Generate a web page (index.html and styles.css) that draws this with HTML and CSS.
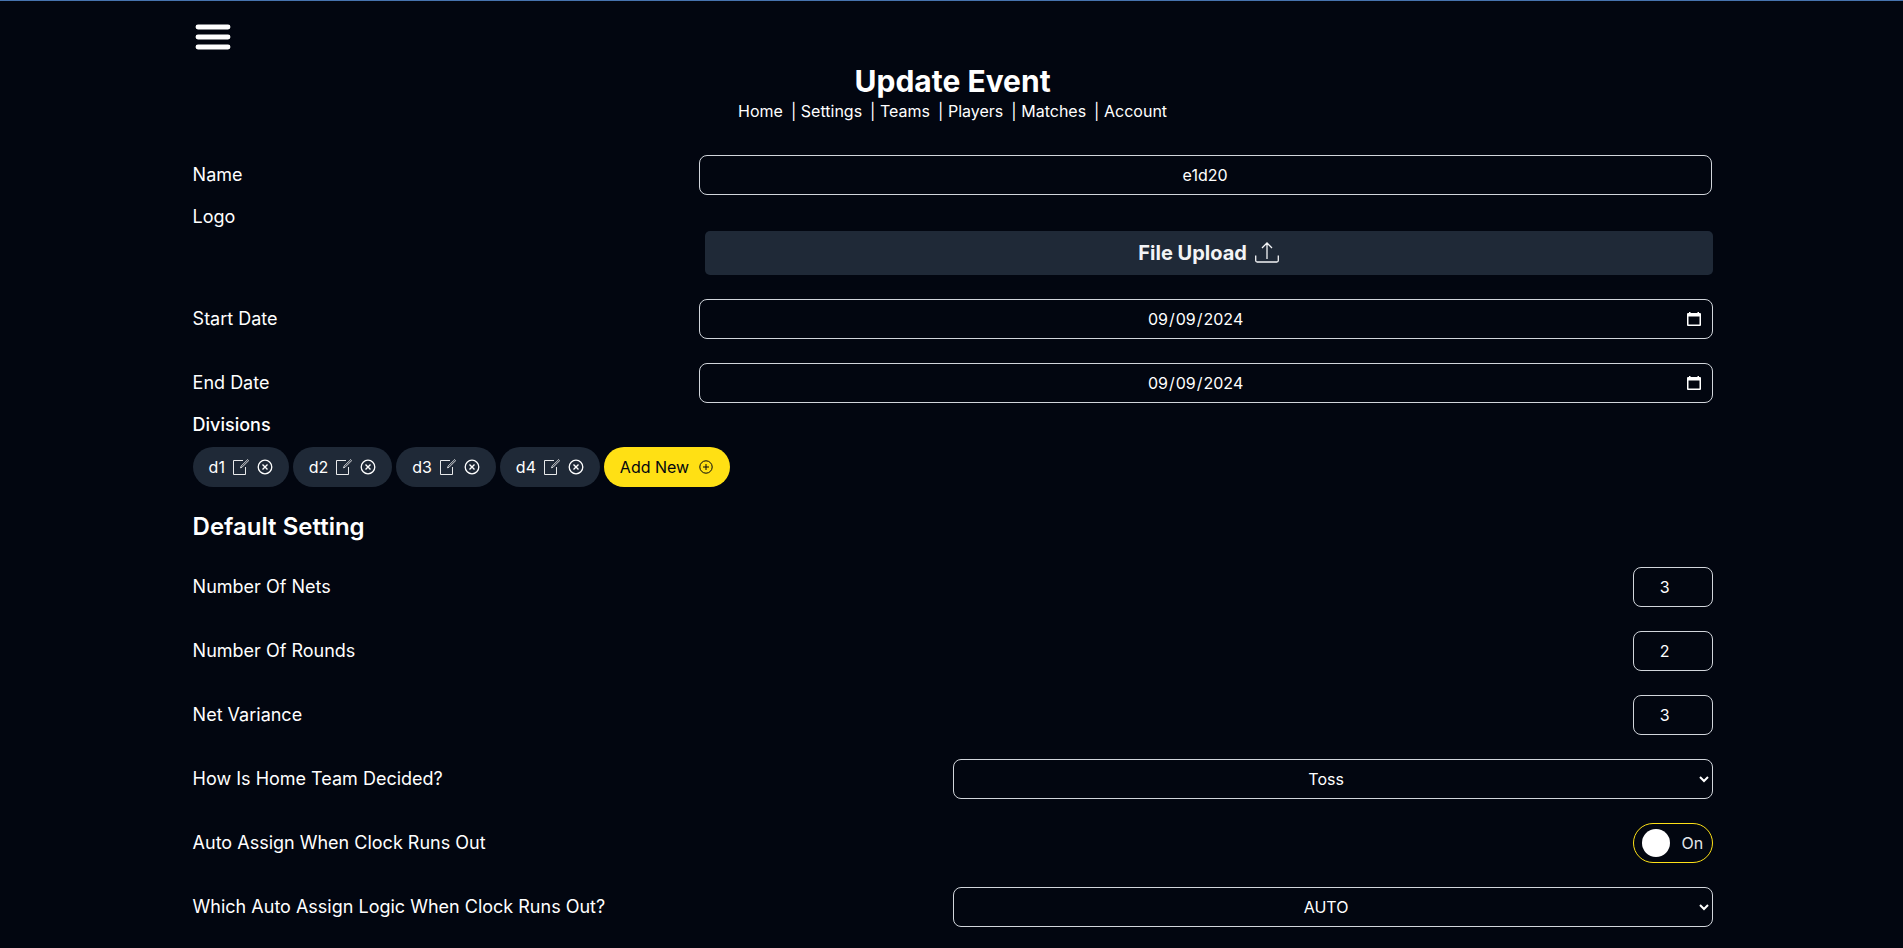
FILE: index.html
```html
<!DOCTYPE html>
<html lang="en">
<head>
<meta charset="utf-8">
<title>Update Event</title>
<link rel="stylesheet" href="styles.css">
</head>
<body>
<svg class="defs" width="0" height="0" aria-hidden="true">
  <symbol id="edit" viewBox="0 0 16 16"><path d="M10 1.500H.5v14h12V8" fill="none" stroke="currentColor" stroke-width=".9"/><path d="M7.500 8.800l.5-1.600L14.700.6l1 1L9.100 8.200z" fill="none" stroke="currentColor" stroke-width=".8"/></symbol>
  <symbol id="remove" viewBox="0 0 16 16"><circle cx="8" cy="8" r="6.800" fill="none" stroke="currentColor" stroke-width="1.300"/><path d="M5.500 5.500l5 5m0-5l-5 5" fill="none" stroke="currentColor" stroke-width="1.400"/></symbol>
  <symbol id="plus" viewBox="0 0 16 16"><circle cx="8" cy="8" r="6.200" fill="none" stroke="currentColor"/><path d="M8 5v6M5 8h6" fill="none" stroke="currentColor"/></symbol>
  <symbol id="calendar" viewBox="0 0 14 15"><path d="M2 0h1.500v1H10.500V0H12v1h1q1 0 1 1v11q0 1-1 1H1q-1 0-1-1V2q0-1 1-1h1zM1.500 4.500v8h11v-8z" fill="currentColor" fill-rule="evenodd"/></symbol>
  <symbol id="chevron" viewBox="0 0 10 8"><path d="M1 2l4 4 4-4" fill="none" stroke="currentColor" stroke-width="2"/></symbol>
</svg>
<div class="page">
  <button class="menu" aria-label="Menu"><svg viewBox="0 0 36 27"><path d="M3 3h30M3 13h30M3 23h30" fill="none" stroke="#fff" stroke-width="4.900" stroke-linecap="round"/></svg></button>
  <h1 class="title">Update Event</h1>
  <nav class="nav"><a>Home</a><span class="bar">|</span><a>Settings</a><span class="bar">|</span><a>Teams</a><span class="bar">|</span><a>Players</a><span class="bar">|</span><a>Matches</a><span class="bar">|</span><a>Account</a></nav>
  <form class="form">
    <div class="row"><label>Name</label><div class="field wide name">e1d20</div></div>
    <div class="logo"><label>Logo</label><div class="upload">File Upload<svg class="upload-icon" viewBox="0 0 24 24"><path d="M.7 14.500v5q0 1.500 1.500 1.500h19.600q1.500 0 1.500-1.500v-5M12 18V2M7 7l5-5 5 5" fill="none" stroke="currentColor" stroke-width="1.300"/></svg></div></div>
    <div class="row"><label>Start Date</label><div class="field wide date"><b>09</b>/<b>09</b>/<b>2024</b><svg class="calendar"><use href="#calendar"/></svg></div></div>
    <div class="row"><label>End Date</label><div class="field wide date"><b>09</b>/<b>09</b>/<b>2024</b><svg class="calendar"><use href="#calendar"/></svg></div></div>
    <h3 class="divisions">Divisions</h3>
    <div class="pills">
      <div class="pill">d1<svg><use href="#edit"/></svg><svg><use href="#remove"/></svg></div>
      <div class="pill">d2<svg><use href="#edit"/></svg><svg><use href="#remove"/></svg></div>
      <div class="pill">d3<svg><use href="#edit"/></svg><svg><use href="#remove"/></svg></div>
      <div class="pill">d4<svg><use href="#edit"/></svg><svg><use href="#remove"/></svg></div>
      <div class="pill add">Add New<svg><use href="#plus"/></svg></div>
    </div>
    <h2 class="heading">Default Setting</h2>
    <div class="row"><label>Number Of Nets</label><div class="field number">3</div></div>
    <div class="row"><label>Number Of Rounds</label><div class="field number">2</div></div>
    <div class="row"><label>Net Variance</label><div class="field number">3</div></div>
    <div class="row"><label>How Is Home Team Decided?</label><div class="field select"><span>Toss</span><svg class="chevron"><use href="#chevron"/></svg></div></div>
    <div class="row"><label>Auto Assign When Clock Runs Out</label><div class="toggle"><i></i>On</div></div>
    <div class="row"><label>Which Auto Assign Logic When Clock Runs Out?</label><div class="field select"><span>AUTO</span><svg class="chevron"><use href="#chevron"/></svg></div></div>
  </form>
</div>
</body>
</html>
```
FILE: styles.css
```css
* { box-sizing: border-box; }
html { background: #020610; }
body { margin: 0; height: 948px; overflow: hidden; border-top: 1px solid #4673ae; background: #020610; color: #fff; font: 16px/24px Inter, sans-serif; }
.defs { position: absolute; }
.page { width: 1520px; margin-left: 192.6px; padding-top: 23px; }
.menu { display: block; width: 36px; height: 26px; margin: 0 0 0 2.4px; padding: 0; border: 0; background: none; }
.menu svg { display: block; width: 36px; height: 27px; }
.title { margin: 13px 0 0; font-size: 30px; line-height: 36px; font-weight: 700; text-align: center; }
.nav { display: flex; justify-content: center; height: 24px; }
.bar { margin: 0 4.6px 0 8px; }
.form { margin-top: 32px; }
.row { display: flex; justify-content: space-between; align-items: center; height: 40px; margin-bottom: 24px; }
.row label, .logo label { font-size: 18px; line-height: 28px; }
.field { position: relative; display: flex; align-items: center; justify-content: center; height: 40px; border: 1px solid #d1d5db; border-radius: 8px; }
.wide { width: 1014px; }
.name { width: 1013px; margin-right: 1px; }
.number { width: 80px; padding-right: 16px; }
.select { width: 760px; padding-right: 13px; }
.date { padding-right: 20px; }
.date b { padding: 0 1px; font-weight: 400; }
.calendar { position: absolute; right: 11px; top: 12px; width: 14px; height: 15px; }
.chevron { position: absolute; right: 3px; top: 15px; width: 10px; height: 8px; }
.logo { display: flex; justify-content: space-between; height: 72px; margin: -16px 0 24px; }
.upload { display: flex; align-items: center; justify-content: center; gap: 8px; width: 1008px; height: 44px; margin-top: 28px; border-radius: 5px; background: #1f2937; color: #f3f4f6; font-size: 20px; font-weight: 700; }
.upload-icon { width: 24px; height: 24px; }
.divisions { margin: -16px 0 8px; font-size: 18px; line-height: 28px; font-weight: 500; }
.pills { display: flex; gap: 3.9px; }
.pill { display: flex; align-items: center; gap: 8px; height: 40px; padding: 0 16px; border-radius: 20px; background: #1f2937; }
.pill svg { width: 16px; height: 16px; }
.add { gap: 8.5px; background: #ffe014; color: #020610; }
.heading { margin: 24px 0; font-size: 24px; line-height: 32px; font-weight: 600; }
.toggle { display: flex; align-items: center; gap: 12px; width: 80px; height: 40px; padding-left: 8px; border: 1px solid #fde017; border-radius: 20px; color: #e5e7eb; }
.toggle i { width: 28px; height: 28px; border-radius: 50%; background: #fff; }
```
